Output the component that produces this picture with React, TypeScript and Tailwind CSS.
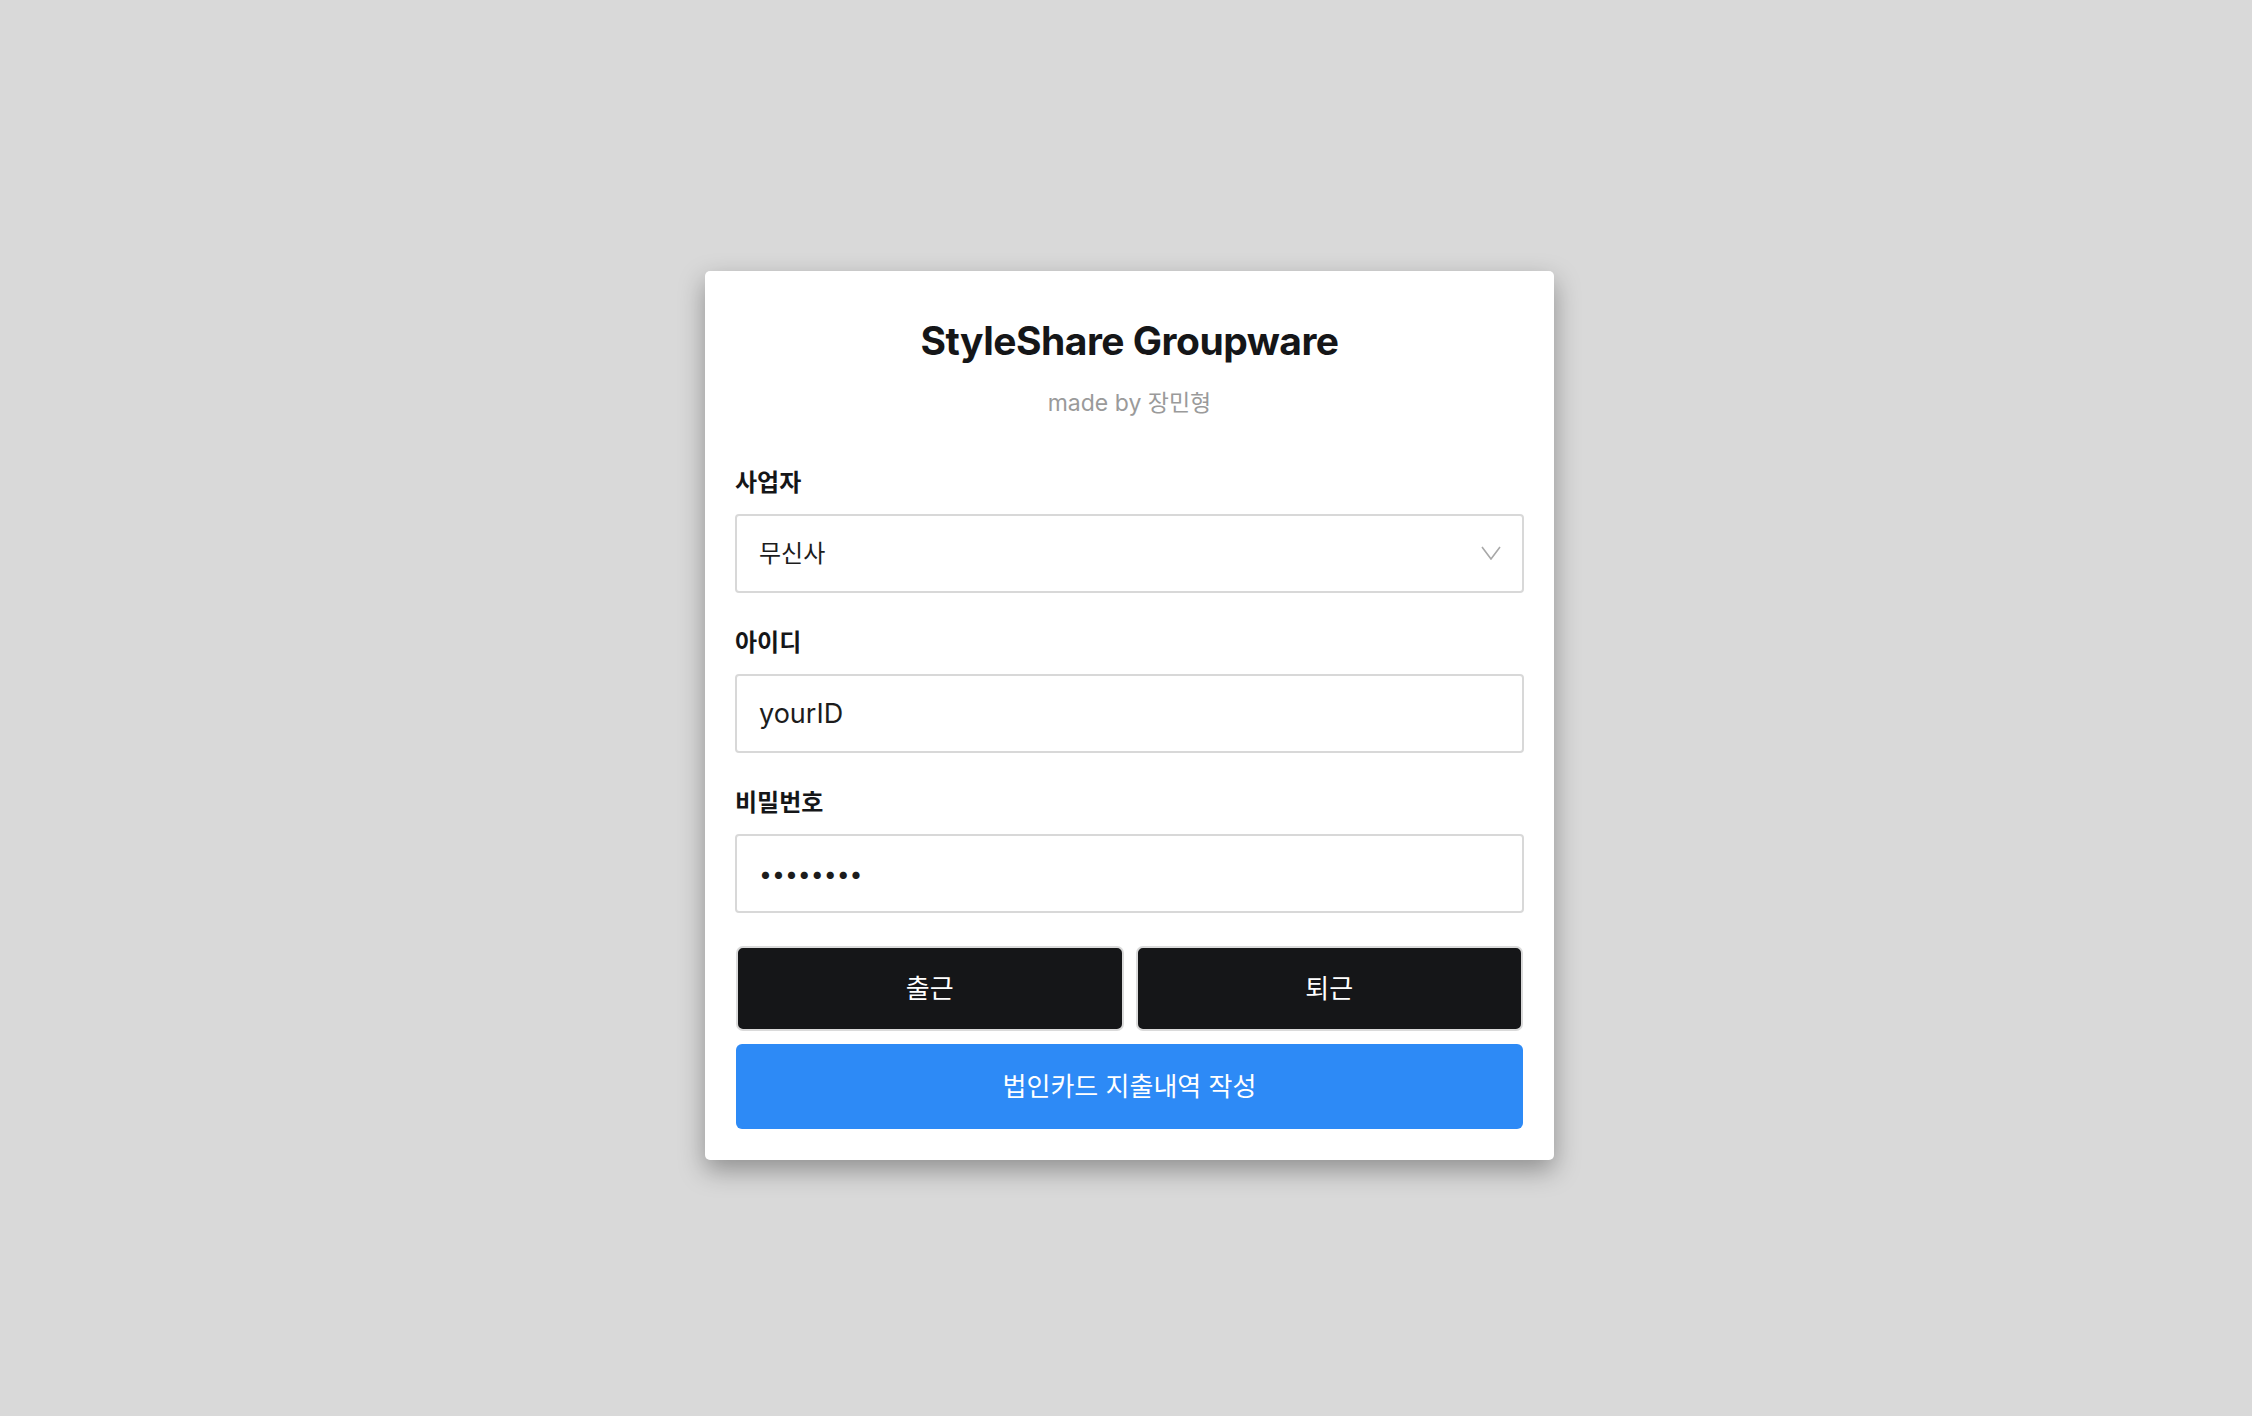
import { useState } from 'react';

const FONT = "font-['Inter','Noto_Sans_CJK_KR',sans-serif]";

function Field({ label, children }: { label: string; children: React.ReactNode }) {
  return (
    <div className="flex flex-col">
      <label className="mb-[16px] text-[24px] font-bold leading-[30px] text-[#151618]">{label}</label>
      {children}
    </div>
  );
}

export default function App() {
  const [company, setCompany] = useState('musinsa');
  const [userId, setUserId] = useState('yourID');
  const [password, setPassword] = useState('password');

  return (
    <main className={`flex min-h-screen items-center justify-center bg-[#d9d9d9] pl-[7px] pt-[15px] ${FONT}`}>
      <div className="w-[849px] rounded-[5px] bg-white px-[30px] pb-[31px] pt-[50px] shadow-[0_10px_26px_rgba(0,0,0,0.34)]">
        <h1 className="text-center text-[39px] font-bold leading-[40px] tracking-[-0.5px] text-[#151618]">
          StyleShare Groupware
        </h1>
        <p className="mt-[27px] text-center text-[23px] leading-[30px] text-[#9a9a9a]">made by 장민형</p>

        <form className="mt-[50px] flex flex-col gap-[35px]" onSubmit={e => e.preventDefault()}>
          <Field label="사업자">
            <div className="relative">
              <select
                value={company}
                onChange={e => setCompany(e.target.value)}
                className="h-[79px] w-full appearance-none rounded-[4px] border-2 border-[#d8d8d8] bg-white pl-[22px] text-[24px] text-[#1c1c1c] outline-none"
              >
                <option value="musinsa">무신사</option>
                <option value="styleshare">스타일쉐어</option>
              </select>
              <svg
                className="pointer-events-none absolute right-[23px] top-[32px]"
                width="20"
                height="14"
                viewBox="0 0 20 14"
                fill="none"
              >
                <polyline points="1,1 10,13 19,1" stroke="#a8a8a8" strokeWidth="1.6" />
              </svg>
            </div>
          </Field>

          <Field label="아이디">
            <input
              value={userId}
              onChange={e => setUserId(e.target.value)}
              className="h-[79px] w-full rounded-[4px] border-2 border-[#d8d8d8] bg-white pl-[22px] text-[27px] text-[#1c1c1c] outline-none"
            />
          </Field>

          <Field label="비밀번호">
            <input
              type="password"
              value={password}
              onChange={e => setPassword(e.target.value)}
              className="h-[79px] w-full rounded-[4px] border-2 border-[#d8d8d8] bg-white pl-[22px] text-[23px] text-[#1c1c1c] outline-none"
            />
          </Field>
        </form>

        <div className="mt-[33px] grid grid-cols-2 gap-[12px] px-[1px]">
          <button className="h-[85px] rounded-[7px] border-2 border-[#dadada] bg-[#151618] text-[26px] text-white">
            출근
          </button>
          <button className="h-[85px] rounded-[7px] border-2 border-[#dadada] bg-[#151618] text-[26px] text-white">
            퇴근
          </button>
        </div>
        <button className="mx-[1px] mt-[13px] h-[85px] w-[calc(100%-2px)] rounded-[6px] bg-[#2d8af6] text-[26px] text-white">
          법인카드 지출내역 작성
        </button>
      </div>
    </main>
  );
}
